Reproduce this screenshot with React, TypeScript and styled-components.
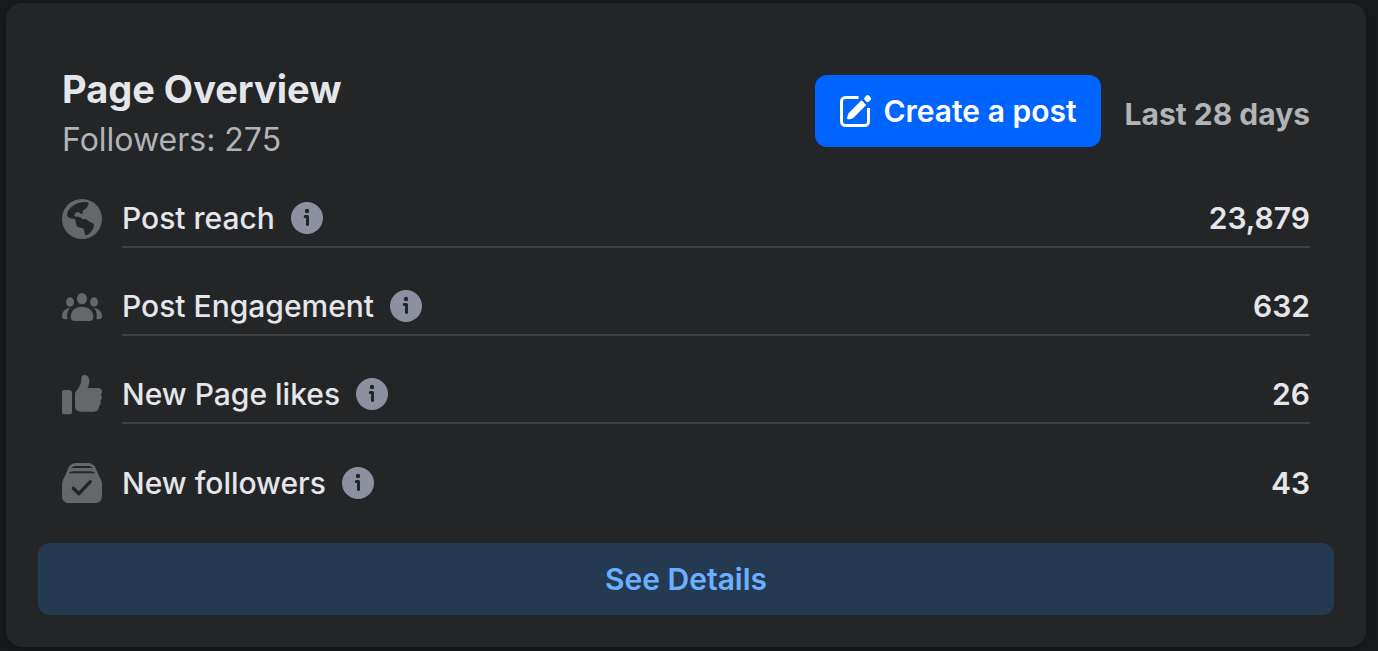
import React from "react";
import styled, { createGlobalStyle } from "styled-components";

const GlobalStyle = createGlobalStyle`
  * { box-sizing: border-box; }
  body {
    margin: 0;
    background: #18191a;
    color: #e4e6eb;
    font-family: Inter, "Liberation Sans", sans-serif;
    -webkit-font-smoothing: antialiased;
  }
`;

const Page = styled.main`
  padding: 3px 12px 4px 6px;
`;

const Card = styled.section`
  padding: 64px 32px 32px;
  border-radius: 16px;
  background: #242526;
  box-shadow: 0 2px 4px rgba(0, 0, 0, 0.2);
`;

const Header = styled.header`
  display: flex;
  justify-content: space-between;
  align-items: flex-start;
  padding: 0 24px;
`;

const Title = styled.h1`
  margin: 0;
  font-size: 38px;
  line-height: 44px;
  font-weight: 700;
`;

const Followers = styled.p`
  margin: 8px 0 0;
  font-size: 32px;
  line-height: 42px;
  color: #b0b3b8;
`;

const Actions = styled.div`
  display: flex;
  align-items: center;
  gap: 24px;
  padding-top: 8px;
`;

const Button = styled.button<{ $primary?: boolean }>`
  display: flex;
  align-items: center;
  justify-content: center;
  gap: 12px;
  height: 72px;
  width: ${(p) => (p.$primary ? "auto" : "100%")};
  padding: 0 24px;
  border: 0;
  border-radius: 12px;
  background: ${(p) => (p.$primary ? "#0064ff" : "#243a52")};
  color: ${(p) => (p.$primary ? "#fff" : "#6bb0ff")};
  font-family: inherit;
  font-size: 30px;
  font-weight: 600;
  cursor: pointer;
`;

const Period = styled.span`
  padding-top: 6px;
  font-size: 30px;
  font-weight: 700;
  color: #b0b3b8;
`;

const Metrics = styled.ul`
  list-style: none;
  margin: 27px 0 31px;
  padding: 0 24px;
  display: grid;
  gap: 28px;
`;

const Metric = styled.li`
  display: flex;
  align-items: center;
  gap: 20px;
  height: 60px;
`;

const MetricBody = styled.div`
  flex: 1;
  display: flex;
  align-items: center;
  height: 60px;
  padding-top: 2px;
  border-bottom: 2px solid #3e4042;
  ${Metric}:last-child & {
    border-bottom: 0;
  }
`;

const MetricIcon = styled.svg`
  display: block;
  flex: none;
  width: 40px;
  height: 42px;
  padding-top: 2px;
  fill: #65676b;
`;

const Label = styled.span`
  font-size: 30px;
  font-weight: 500;
`;

const Value = styled.span`
  margin-left: auto;
  font-size: 30px;
  font-weight: 600;
`;

const InfoButton = styled.button`
  display: flex;
  margin-left: 16px;
  padding: 0;
  border: 0;
  background: none;
  cursor: pointer;
`;

const Compose = () => (
  <svg width="32" height="32" viewBox="0 0 32 32" fill="none" aria-hidden="true">
    <path d="M19.500 2.500H6.500a4 4 0 0 0-4 4v20a4 4 0 0 0 4 4h19a4 4 0 0 0 4-4V13" stroke="#fff" strokeWidth="3" />
    <path d="M22.500 6.300 26.200 10 14.500 21.600Q13.300 22.800 11.500 23.200L9.800 23.600Q8.600 23.800 8.900 22.600L9.300 20.900Q9.800 19 11 17.800Z" fill="#fff" stroke="#fff" strokeWidth="1.500" strokeLinejoin="round" />
    <rect x="25.600" y="0.600" width="6" height="6" rx="2" transform="rotate(45 28.600 3.600)" fill="#fff" />
  </svg>
);

const Info = () => (
  <svg width="32" height="32" viewBox="0 0 32 32" aria-hidden="true">
    <circle cx="16" cy="16" r="16" fill="#8d909e" />
    <circle cx="16" cy="9" r="2.200" fill="#242526" />
    <path d="M14.200 14.500h2.300v8" fill="none" stroke="#242526" strokeWidth="3" strokeLinecap="round" strokeLinejoin="round" />
  </svg>
);

const Globe = () => (
  <MetricIcon viewBox="0 0 120 120" aria-hidden="true">
    <circle cx="60" cy="60" r="60" />
    <path
      fill="#242526"
      d="M76 10C54 6 22 20 15 44C14 54 22 58 34 59C42 60 41 66 42 74C43 84 50 85 60 87C68 89 66 96 68 104C70 111 76 109 82 104C90 97 96 86 96 78C94 70 86 71 80 67C76 62 72 61 64 61C58 60 58 54 50 53C44 54 35 53 38 46C43 37 50 38 54 43C58 47 64 45 62 40C61 34 70 32 75 25C80 18 82 12 76 10Z"
    />
  </MetricIcon>
);

const People = () => (
  <MetricIcon viewBox="0 0 120 120" aria-hidden="true">
    <ellipse cx="60" cy="35" rx="15" ry="17" />
    <ellipse cx="24" cy="45" rx="12" ry="14" />
    <ellipse cx="96" cy="45" rx="12" ry="14" />
    <path d="M60 59c21 0 34 13 34 30 0 9-4 13-12 13H38c-8 0-12-4-12-13 0-17 13-30 34-30Z" />
    <path d="M25 63c-9 8-11 20-8 34H9c-6 0-9-3-9-9 0-14 10-25 25-25ZM95 63c9 8 11 20 8 34h8c6 0 9-3 9-9 0-14-10-25-25-25Z" />
  </MetricIcon>
);

const Thumb = () => (
  <MetricIcon viewBox="0 0 120 120" aria-hidden="true">
    <rect y="45" width="30" height="73" rx="8" />
    <path d="M39 58c0-7 6-12 10-18 6-10 9-17 9-28 0-8 3-12 10-12 10 0 15 10 14 21-1 8-3 13-5 18h31c8 0 12 5 12 11 0 5-2 8-4 10 5 4 4 13-1 17 3 6 1 12-4 16 1 11-5 17-16 17H57c-12 0-18-6-18-17Z" />
  </MetricIcon>
);

const Stack = () => (
  <MetricIcon viewBox="0 0 120 120" aria-hidden="true">
    <path d="M17 20C22 5 32 0 46 0h28c14 0 24 5 29 20l9 21c5 8 8 14 8 22v35c0 15-8 22-22 22H22c-14 0-22-7-22-22V63c0-8 3-14 8-22Z" />
    <path d="M27 15c5-5 12-6 20-6h26c8 0 15 1 20 6ZM19 31c6-5 14-6 23-6h36c9 0 17 1 23 6Z" fill="#242526" />
    <path d="M34 76 51 92 85 56" fill="none" stroke="#242526" strokeWidth="10" strokeLinecap="round" strokeLinejoin="round" />
  </MetricIcon>
);

const metrics = [
  { icon: <Globe />, label: "Post reach", value: "23,879" },
  { icon: <People />, label: "Post Engagement", value: "632" },
  { icon: <Thumb />, label: "New Page likes", value: "26" },
  { icon: <Stack />, label: "New followers", value: "43" },
];

export default function App() {
  return (
    <>
      <GlobalStyle />
      <Page>
        <Card>
          <Header>
            <div>
              <Title>Page Overview</Title>
              <Followers>Followers: 275</Followers>
            </div>
            <Actions>
              <Button type="button" $primary>
                <Compose />
                Create a post
              </Button>
              <Period>Last 28 days</Period>
            </Actions>
          </Header>
          <Metrics>
            {metrics.map((m) => (
              <Metric key={m.label}>
                {m.icon}
                <MetricBody>
                  <Label>{m.label}</Label>
                  <InfoButton type="button" aria-label={`About ${m.label}`}>
                    <Info />
                  </InfoButton>
                  <Value>{m.value}</Value>
                </MetricBody>
              </Metric>
            ))}
          </Metrics>
          <Button type="button">See Details</Button>
        </Card>
      </Page>
    </>
  );
}
